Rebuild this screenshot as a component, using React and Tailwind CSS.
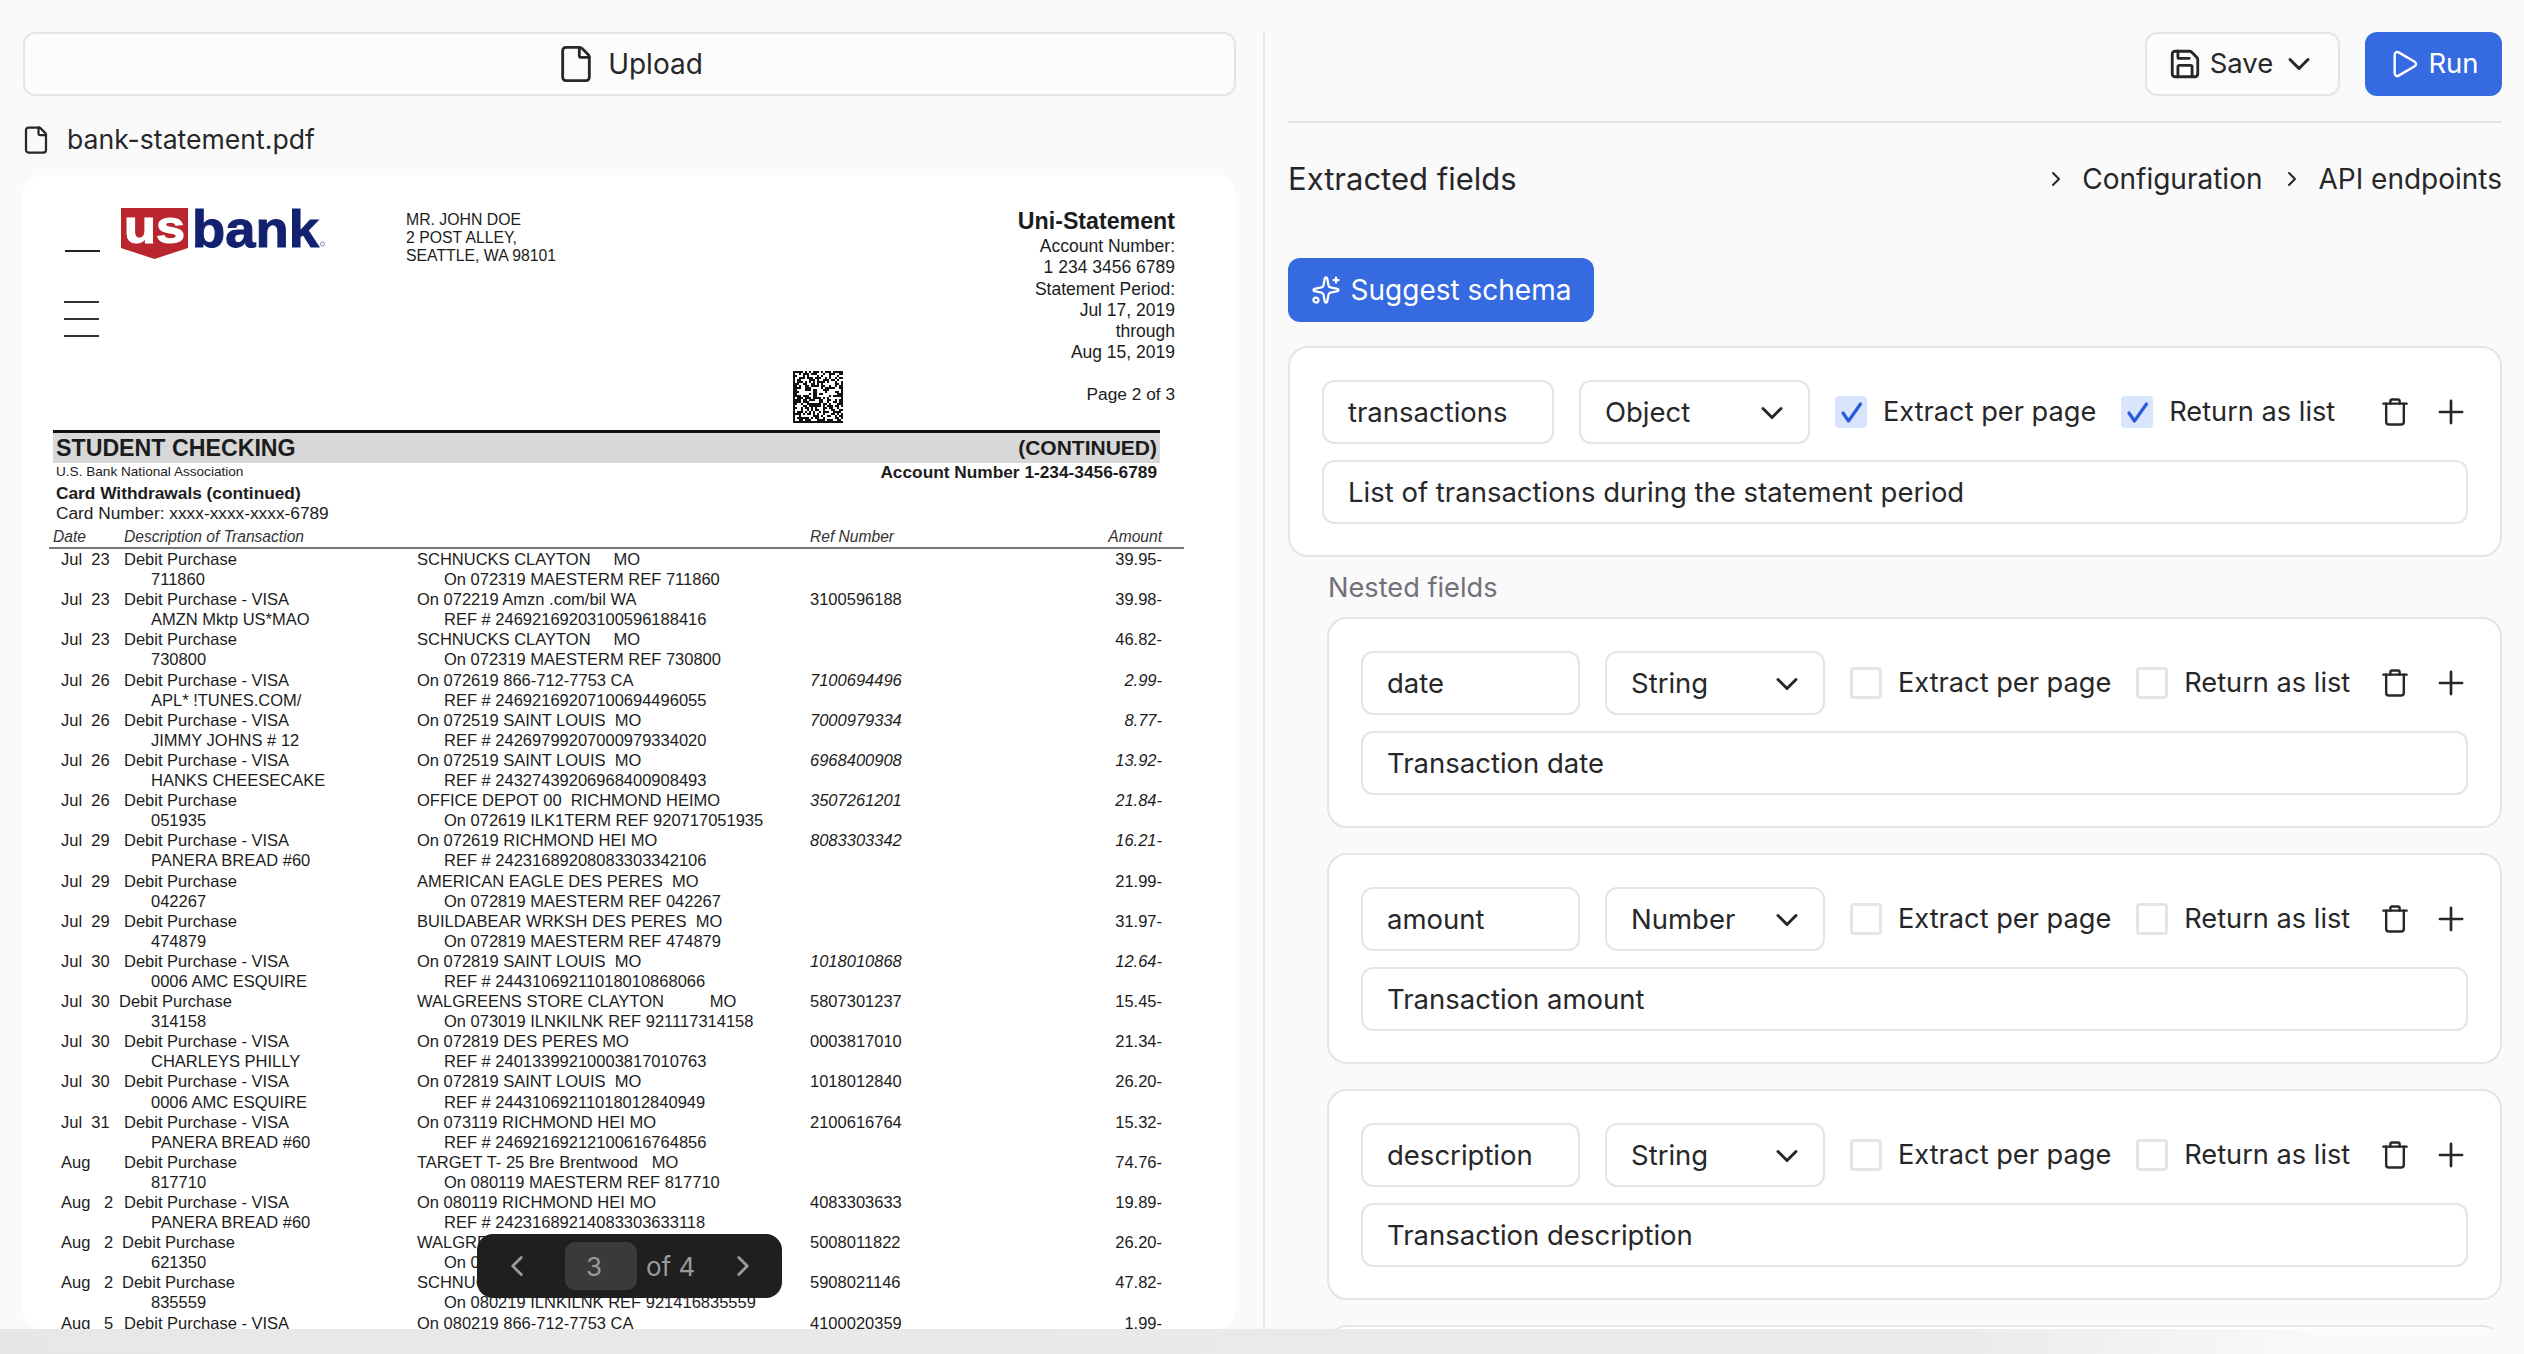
import { File, Save, ChevronDown, ChevronRight, ChevronLeft, Play, Sparkles, Plus } from 'lucide-react';

// date, description, merchant, ref, amount, line 2 left, line 2 right, italic numbers, description shift
const rows = [
  ['Jul  23', 'Debit Purchase', 'SCHNUCKS CLAYTON     MO', '', '39.95-', '711860', 'On 072319 MAESTERM REF 711860'],
  ['Jul  23', 'Debit Purchase - VISA', 'On 072219 Amzn .com/bil WA', '3100596188', '39.98-', 'AMZN Mktp US*MAO', 'REF # 24692169203100596188416'],
  ['Jul  23', 'Debit Purchase', 'SCHNUCKS CLAYTON     MO', '', '46.82-', '730800', 'On 072319 MAESTERM REF 730800'],
  ['Jul  26', 'Debit Purchase - VISA', 'On 072619 866-712-7753 CA', '7100694496', '2.99-', 'APL* !TUNES.COM/', 'REF # 24692169207100694496055', true],
  ['Jul  26', 'Debit Purchase - VISA', 'On 072519 SAINT LOUIS  MO', '7000979334', '8.77-', 'JIMMY JOHNS # 12', 'REF # 24269799207000979334020', true],
  ['Jul  26', 'Debit Purchase - VISA', 'On 072519 SAINT LOUIS  MO', '6968400908', '13.92-', 'HANKS CHEESECAKE', 'REF # 24327439206968400908493', true],
  ['Jul  26', 'Debit Purchase', 'OFFICE DEPOT 00  RICHMOND HEIMO', '3507261201', '21.84-', '051935', 'On 072619 ILK1TERM REF 920717051935', true],
  ['Jul  29', 'Debit Purchase - VISA', 'On 072619 RICHMOND HEI MO', '8083303342', '16.21-', 'PANERA BREAD #60', 'REF # 24231689208083303342106', true],
  ['Jul  29', 'Debit Purchase', 'AMERICAN EAGLE DES PERES  MO', '', '21.99-', '042267', 'On 072819 MAESTERM REF 042267'],
  ['Jul  29', 'Debit Purchase', 'BUILDABEAR WRKSH DES PERES  MO', '', '31.97-', '474879', 'On 072819 MAESTERM REF 474879'],
  ['Jul  30', 'Debit Purchase - VISA', 'On 072819 SAINT LOUIS  MO', '1018010868', '12.64-', '0006 AMC ESQUIRE', 'REF # 24431069211018010868066', true],
  ['Jul  30', 'Debit Purchase', 'WALGREENS STORE CLAYTON          MO', '5807301237', '15.45-', '314158', 'On 073019 ILNKILNK REF 921117314158', false, '-ml-[5px]'],
  ['Jul  30', 'Debit Purchase - VISA', 'On 072819 DES PERES MO', '0003817010', '21.34-', 'CHARLEYS PHILLY', 'REF # 24013399210003817010763'],
  ['Jul  30', 'Debit Purchase - VISA', 'On 072819 SAINT LOUIS  MO', '1018012840', '26.20-', '0006 AMC ESQUIRE', 'REF # 24431069211018012840949'],
  ['Jul  31', 'Debit Purchase - VISA', 'On 073119 RICHMOND HEI MO', '2100616764', '15.32-', 'PANERA BREAD #60', 'REF # 24692169212100616764856'],
  ['Aug', 'Debit Purchase', 'TARGET T- 25 Bre Brentwood   MO', '', '74.76-', '817710', 'On 080119 MAESTERM REF 817710'],
  ['Aug   2', 'Debit Purchase - VISA', 'On 080119 RICHMOND HEI MO', '4083303633', '19.89-', 'PANERA BREAD #60', 'REF # 24231689214083303633118'],
  ['Aug   2', 'Debit Purchase', 'WALGREENS STORE CLAYTON   MO', '5008011822', '26.20-', '621350', 'On 080219 MAESTERM REF 621350', false, '-ml-[2px]'],
  ['Aug   2', 'Debit Purchase', 'SCHNUCKS CLAYTON     MO', '5908021146', '47.82-', '835559', 'On 080219 ILNKILNK REF 921416835559', false, '-ml-[2px]'],
  ['Aug   5', 'Debit Purchase - VISA', 'On 080219 866-712-7753 CA', '4100020359', '1.99-', '', ''],
];

// data matrix style barcode, fixed seed so it never changes
const barcode = [];
let seed = 7;
for (let y = 0; y < 26; y++) {
  for (let x = 0; x < 25; x++) {
    seed = (seed * 1103515245 + 12345) % 2147483648;
    const solid = x === 0 || y === 25 || (y === 0 && x % 2 === 0) || (x === 24 && y % 2 === 1) || seed % 100 < 52;
    if (solid) barcode.push([x, y]);
  }
}

function Logo() {
  return (
    <svg width="207" height="52" viewBox="0 0 207 52" className="shrink-0">
      <path d="M0 0H67V40L33.5 51L0 40Z" fill="#b9262d" />
      <text x="3" y="35" fill="#fff" stroke="#fff" strokeWidth="1.2" fontFamily="Liberation Sans" fontWeight="700" fontSize="47" textLength="61" lengthAdjust="spacingAndGlyphs">us</text>
      <text x="71" y="38.5" fill="#12226f" stroke="#12226f" strokeWidth="1" fontFamily="Liberation Sans" fontWeight="700" fontSize="52" textLength="127" lengthAdjust="spacingAndGlyphs">bank</text>
      <circle cx="201.5" cy="36" r="2" fill="none" stroke="#7f8cc0" strokeWidth="1" />
    </svg>
  );
}

function TrashIcon() {
  return (
    <svg viewBox="0 0 28 30" fill="none" stroke="currentColor" strokeWidth="2.6" strokeLinecap="round" strokeLinejoin="round" className="ml-auto w-[26px] h-[30px] shrink-0">
      <path d="M1.5 6H26.5" />
      <path d="M9 6V3.5a2 2 0 0 1 2-2h6a2 2 0 0 1 2 2V6" />
      <path d="M4.5 6V25.5a3 3 0 0 0 3 3h13a3 3 0 0 0 3-3V6" />
    </svg>
  );
}

function StatementRow({ row }) {
  const [date, desc, merchant, ref, amount, sub, subRight, italic, shift] = row;
  const numberStyle = italic ? 'italic' : '';
  return (
    <>
      <div className="grid grid-cols-[63px_293px_393px_1fr_100px] h-[20.1px] leading-[20.1px] whitespace-pre">
        <div>{date}</div>
        <div className={shift || ''}>{desc}</div>
        <div>{merchant}</div>
        <div className={numberStyle}>{ref}</div>
        <div className={`text-right ${numberStyle}`}>{amount}</div>
      </div>
      <div className="grid grid-cols-[63px_293px_393px_1fr_100px] h-[20.1px] leading-[20.1px] whitespace-pre">
        <div></div>
        <div className="pl-[27px]">{sub}</div>
        <div className="pl-[27px] col-span-2">{subRight}</div>
      </div>
    </>
  );
}

function Statement() {
  return (
    <div className="font-['Liberation_Sans',Arial,sans-serif] text-[#1c1c1c]">
      <div className="flex h-[255px] pl-[41px] pr-[61px]">
        <div className="w-[57px] shrink-0 pt-[75px]">
          <div className="w-[35px] h-[2px] ml-[1px] bg-[#222]"></div>
          <div className="w-[35px] h-[2px] mt-[49px] bg-[#333]"></div>
          <div className="w-[35px] h-[2px] mt-[15px] bg-[#333]"></div>
          <div className="w-[35px] h-[2px] mt-[15px] bg-[#333]"></div>
        </div>
        <div className="pt-[33px]">
          <Logo />
        </div>
        <div className="ml-[78px] pt-[36px] text-[15.8px] leading-[18px]">
          <div>MR. JOHN DOE</div>
          <div>2 POST ALLEY,</div>
          <div>SEATTLE, WA 98101</div>
        </div>
        <div className="ml-auto w-[382px] text-right text-[17.5px] leading-[21.3px]">
          <div className="mt-[33px] font-bold text-[23.2px] leading-[26px]">Uni-Statement</div>
          <div className="mt-[2px]">Account Number:</div>
          <div>1 234 3456 6789</div>
          <div>Statement Period:</div>
          <div>Jul 17, 2019</div>
          <div>through</div>
          <div>Aug 15, 2019</div>
          <div className="flex justify-between items-start mt-[7px]">
            <svg width="50" height="52" viewBox="0 0 25 26" shapeRendering="crispEdges">
              {barcode.map(([x, y]) => (
                <rect key={`${x}-${y}`} x={x} y={y} width="1" height="1" fill="#111" />
              ))}
            </svg>
            <div className="mt-[13px] text-[17.3px]">Page 2 of 3</div>
          </div>
        </div>
      </div>

      <div className="ml-[30px] w-[1107px]">
        <div className="flex items-center justify-between h-[33px] border-t-[3px] border-[#111] bg-[#d8d8d8] px-[3px] font-bold">
          <span className="text-[23.2px]">STUDENT CHECKING</span>
          <span className="text-[21px]">(CONTINUED)</span>
        </div>
        <div className="flex justify-between h-[18px] leading-[18px] px-[3px]">
          <span className="text-[13.6px]">U.S. Bank National Association</span>
          <span className="text-[17.3px] font-bold">Account Number 1-234-3456-6789</span>
        </div>
        <div className="mt-[2px] pl-[3px] text-[17.3px] leading-[20px]">
          <div className="font-bold">Card Withdrawals (continued)</div>
          <div>Card Number: xxxx-xxxx-xxxx-6789</div>
        </div>
      </div>

      <div className="ml-[26px] w-[1135px] border-b-2 border-[#777] mt-[4px]">
        <div className="grid grid-cols-[71px_686px_1fr_100px] w-[1113px] pl-[4px] italic text-[15.6px] leading-[20px] text-[#333] whitespace-pre">
          <div>Date</div>
          <div>Description of Transaction</div>
          <div>Ref Number</div>
          <div className="text-right">Amount</div>
        </div>
      </div>

      <div className="w-[1139px] pl-[38px] text-[16.5px]">
        {rows.map((row, i) => (
          <StatementRow key={i} row={row} />
        ))}
      </div>
    </div>
  );
}

function Pager() {
  return (
    <div className="absolute left-[454px] top-[1059px] w-[305px] h-[64px] rounded-[16px] bg-[#1f1f1f] flex items-center pl-[23px] font-['Inter',sans-serif] text-[26px] text-[#9a9a9a]">
      <ChevronLeft className="w-[34px] h-[34px] shrink-0" strokeWidth={2} />
      <div className="ml-[31px] w-[72px] h-[48px] pr-[14px] rounded-[10px] bg-[#3a3a3a] flex items-center justify-center">3</div>
      <span className="ml-[9px]">of 4</span>
      <ChevronRight className="ml-[31px] w-[34px] h-[34px] shrink-0" strokeWidth={2} />
    </div>
  );
}

function CheckBox({ checked, label }) {
  return (
    <div className="flex items-center gap-[16px]">
      {checked ? (
        <div className="w-[32px] h-[32px] rounded-[4px] bg-[#d9e5fd]">
          <svg viewBox="0 0 32 32" fill="none" stroke="#2a5bd7" strokeWidth="3.2" strokeLinecap="round" strokeLinejoin="round" className="w-[32px] h-[32px]">
            <path d="M8 17L13.5 25L25.5 8" />
          </svg>
        </div>
      ) : (
        <div className="w-[32px] h-[32px] rounded-[4px] border-[3px] border-[#e5e5e5] bg-white"></div>
      )}
      <span className="text-[27.2px]">{label}</span>
    </div>
  );
}

function FieldCard({ name, type, description, checked, nested }) {
  return (
    <div className="rounded-[20px] border-2 border-[#e5e5e5] bg-white p-[32px] pb-[31px]">
      <div className="flex items-center h-[64px]">
        <div className={`${nested ? 'w-[219px]' : 'w-[232px]'} h-[64px] rounded-[12px] border-2 border-[#e5e5e5] bg-white flex items-center pl-[24px] pt-[1px]`}>{name}</div>
        <div className={`${nested ? 'w-[220px]' : 'w-[231px]'} ml-[25px] h-[64px] rounded-[12px] border-2 border-[#e5e5e5] bg-white flex items-center justify-between pl-[24px] pr-[18px] pt-[1px]`}>
          <span>{type}</span>
          <ChevronDown className="w-[36px] h-[36px]" strokeWidth={2} />
        </div>
        <div className="ml-[25px]">
          <CheckBox checked={checked} label="Extract per page" />
        </div>
        <div className="ml-[25px]">
          <CheckBox checked={checked} label="Return as list" />
        </div>
        <TrashIcon />
        <Plus className="ml-[24px] mr-[-2px] w-[38px] h-[38px] shrink-0" strokeWidth={1.7} />
      </div>
      <div className="mt-[16px] h-[64px] rounded-[12px] border-2 border-[#e5e5e5] bg-white flex items-center pl-[24px] pt-[1px]">{description}</div>
    </div>
  );
}

export default function App() {
  return (
    <div className="relative flex h-[1354px] w-[2524px] overflow-hidden bg-[#fafafa] pt-[32px] pb-[25px] font-['Inter',sans-serif] text-[27.5px] text-[#27272a]">
      {/* Left side, document viewer */}
      <div className="w-[1263px] shrink-0 pl-[23px] pr-[27px] flex flex-col">
        <div className="h-[64px] shrink-0 rounded-[12px] border-2 border-[#e5e5e5] bg-[#fcfcfc] flex items-center justify-center gap-[12px]">
          <File className="w-[40px] h-[40px]" strokeWidth={1.7} />
          <span className="text-[28px]">Upload</span>
        </div>
        <div className="mt-[29px] h-[30px] flex items-center gap-[16px]">
          <File className="w-[30px] h-[30px] -ml-[2px]" strokeWidth={1.8} />
          <span className="text-[26.6px]">bank-statement.pdf</span>
        </div>
        <div className="relative mt-[20px] flex-1 rounded-[20px] bg-white overflow-hidden">
          <Statement />
          <Pager />
        </div>
      </div>

      {/* Right side, schema editor */}
      <div className="flex-1 border-l-2 border-[#e8e8e8] pl-[23px] pr-[22px] overflow-hidden">
        <div className="flex justify-end gap-[25px] pb-[25px] border-b-2 border-[#e5e5e5]">
          <button className="h-[64px] w-[195px] rounded-[12px] border-2 border-[#e5e5e5] bg-[#fcfcfc] flex items-center justify-center gap-[8px]">
            <Save className="w-[34px] h-[34px]" strokeWidth={2} />
            <span>Save</span>
            <ChevronDown className="w-[36px] h-[36px]" strokeWidth={2} />
          </button>
          <button className="h-[64px] w-[137px] rounded-[12px] bg-[#366ae0] text-white flex items-center justify-center gap-[8px]">
            <Play className="w-[32px] h-[32px]" strokeWidth={1.8} />
            <span>Run</span>
          </button>
        </div>

        <div className="mt-[38px] flex items-center justify-between h-[36px]">
          <span className="text-[31px]">Extracted fields</span>
          <div className="flex items-center text-[28px]">
            <ChevronRight className="w-[24px] h-[24px]" strokeWidth={2} />
            <span className="ml-[14px]">Configuration</span>
            <ChevronRight className="ml-[18px] w-[24px] h-[24px]" strokeWidth={2} />
            <span className="ml-[14px]">API endpoints</span>
          </div>
        </div>

        <button className="mt-[61px] h-[64px] w-[306px] rounded-[12px] bg-[#366ae0] text-white text-[28px] flex items-center justify-center gap-[10px]">
          <Sparkles className="w-[30px] h-[30px]" strokeWidth={1.8} />
          <span>Suggest schema</span>
        </button>

        <div className="mt-[24px]">
          <FieldCard name="transactions" type="Object" description="List of transactions during the statement period" checked />
        </div>

        <div className="ml-[40px] mt-[14px] h-[34px] leading-[34px] text-[27.2px] text-[#71717a]">Nested fields</div>

        <div className="ml-[39px] mt-[12px] flex flex-col gap-[25px]">
          <FieldCard nested name="date" type="String" description="Transaction date" />
          <FieldCard nested name="amount" type="Number" description="Transaction amount" />
          <FieldCard nested name="description" type="String" description="Transaction description" />
          <div className="h-[211px] rounded-[20px] border-2 border-[#e5e5e5] bg-white"></div>
        </div>
      </div>

      {/* Grey strip along the bottom edge */}
      <div className="absolute bottom-0 left-0 right-0 h-[25px] bg-[linear-gradient(90deg,#e7e7e7_0%,#ebebeb_78%,#fafafa_92%)]"></div>
    </div>
  );
}
